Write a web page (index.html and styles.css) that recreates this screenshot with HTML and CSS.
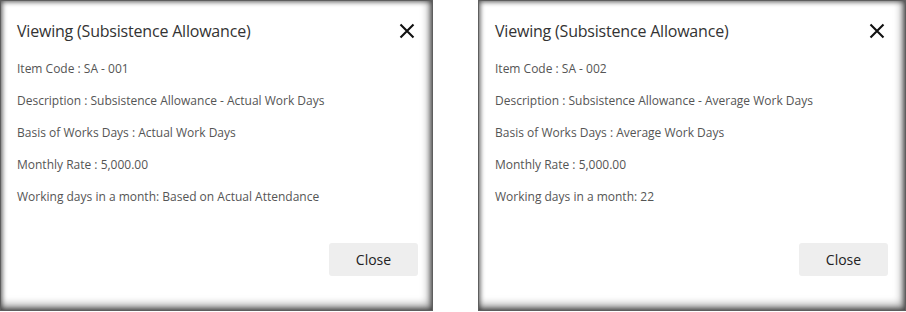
FILE: index.html
```html
<!DOCTYPE html>
<html lang="en">
<head>
<meta charset="utf-8">
<title>Viewing dialogs</title>
<link rel="stylesheet" href="styles.css">
</head>
<body>
<div class="stage">
  <section class="dialog dialog-left">
    <header class="dialog-head">
      <h2 class="dialog-title">Viewing (Subsistence Allowance)</h2>
      <svg class="close-x" viewBox="0 0 16 16" width="16" height="16" aria-hidden="true"><path d="M1.5 1.5 L14.5 14.5 M14.5 1.5 L1.5 14.5" stroke="#111" stroke-width="2.1" fill="none"/></svg>
    </header>
    <div class="dialog-body">
      <p class="field">Item Code : SA - 001</p>
      <p class="field">Description : Subsistence Allowance - Actual Work Days</p>
      <p class="field">Basis of Works Days : Actual Work Days</p>
      <p class="field">Monthly Rate : 5,000.00</p>
      <p class="field">Working days in a month: Based on Actual Attendance</p>
    </div>
    <footer class="dialog-foot">
      <button class="btn-close" type="button">Close</button>
    </footer>
  </section>
  <section class="dialog dialog-right">
    <header class="dialog-head">
      <h2 class="dialog-title">Viewing (Subsistence Allowance)</h2>
      <svg class="close-x" viewBox="0 0 16 16" width="16" height="16" aria-hidden="true"><path d="M1.5 1.5 L14.5 14.5 M14.5 1.5 L1.5 14.5" stroke="#111" stroke-width="2.1" fill="none"/></svg>
    </header>
    <div class="dialog-body">
      <p class="field">Item Code : SA - 002</p>
      <p class="field">Description : Subsistence Allowance - Average Work Days</p>
      <p class="field">Basis of Works Days : Average Work Days</p>
      <p class="field">Monthly Rate : 5,000.00</p>
      <p class="field">Working days in a month: 22</p>
    </div>
    <footer class="dialog-foot">
      <button class="btn-close" type="button">Close</button>
    </footer>
  </section>
</div>
</body>
</html>
```

FILE: styles.css
```css
* { box-sizing: border-box; }
html, body { margin: 0; padding: 0; background: #ffffff; }
body { font-family: "Open Sans", "Noto Sans", "Liberation Sans", sans-serif; }
.stage {
  display: flex;
  gap: 45px;
  width: 906px;
  height: 312px;
}
.dialog {
  height: 311px;
  background: #ffffff;
  display: flex;
  flex-direction: column;
  box-shadow:
    inset 0 0 0 1px #5e5e5e,
    inset 0 0 5px 2px rgba(0,0,0,0.6),
    inset -3px -5px 8px 1px rgba(0,0,0,0.4);
}
.dialog-left { width: 433px; padding: 0 15px 0 17px; }
.dialog-right { width: 428px; padding: 0 18px 0 17px; }
.dialog-head {
  display: flex;
  justify-content: space-between;
  align-items: center;
  padding-top: 20px;
  height: 42px;
}
.dialog-title {
  margin: 0;
  font-size: 16px;
  font-weight: 400;
  color: #333;
  letter-spacing: -0.2px;
}
.close-x { margin-right: 3px; margin-top: 0; }
.dialog-body { padding-top: 18px; }
.field {
  margin: 0;
  height: 32px;
  font-size: 12px;
  color: #555;
  letter-spacing: 0;
}
.dialog-foot {
  margin-top: auto;
  display: flex;
  justify-content: flex-end;
  padding-bottom: 35px;
}
.btn-close {
  width: 89px;
  height: 33px;
  border: none;
  border-radius: 3px;
  background: #eeeeee;
  color: #222;
  font-family: inherit;
  font-size: 14px;
}
```
